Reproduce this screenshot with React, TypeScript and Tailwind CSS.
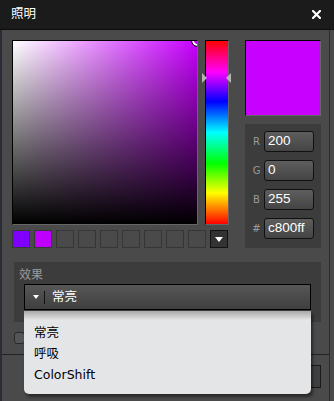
const swatches = ['#8000ff', '#c000ff', '', '', '', '', '', '', ''];

const fields = [
  { label: 'R', value: '200' },
  { label: 'G', value: '0' },
  { label: 'B', value: '255' },
  { label: '#', value: 'c800ff' },
];

const ui = { fontFamily: '"DejaVu Sans", "Noto Sans CJK SC", sans-serif' };
const num = { fontFamily: '"Liberation Sans", "Noto Sans CJK SC", sans-serif' };

export default function App() {
  return (
    <div className="relative w-[334px] h-[401px] overflow-hidden bg-[#4a4a4a]" style={ui}>
      {/* title bar */}
      <div className="flex h-[30px] items-center justify-between border-b border-[#0e0e0e] bg-[#1b1b1b] pl-[11px] pr-[13px]">
        <span className="text-[12.5px] text-white leading-none">照明</span>
        <svg width="9" height="9" viewBox="0 0 9 9">
          <path d="M1 1 L8 8 M8 1 L1 8" stroke="#fff" strokeWidth="2.2" strokeLinecap="square" />
        </svg>
      </div>

      <div className="h-[371px] border-l-2 border-[#2a2d33] border-r border-r-[#2c2c2c] w-[330px]">
        <div className="flex pl-[10px] pt-[10px]">
          {/* picker column */}
          <div className="flex flex-col gap-[5px]">
            <div className="flex gap-[7px]">
              <div className="relative h-[185px] w-[186px] overflow-hidden border border-t-black border-l-black border-r-[#666] border-b-[#666]">
                <div className="absolute inset-0 bg-[linear-gradient(to_right,#ffffff,#c800ff)]" />
                <div className="absolute inset-0 bg-[linear-gradient(to_bottom,rgba(0,0,0,0),#000000)]" />
                <div className="absolute -right-[6px] -top-[6px] h-[11px] w-[11px] rounded-full border-2 border-white outline outline-1 outline-black" />
              </div>
              <div className="relative h-[185px] w-[24px]">
                <div className="h-full w-full border border-t-black border-l-black border-r-[#666] border-b-[#666] bg-[linear-gradient(to_bottom,#ff0000,#ff00ff_17%,#0000ff_33%,#00ffff_50%,#00ff00_67%,#ffff00_83%,#ff0000)]" />
                <div className="absolute -left-[3px] top-[33px] h-0 w-0 border-y-[5px] border-l-[5px] border-y-transparent border-l-[#b4b4b4]" />
                <div className="absolute -right-[2px] top-[33px] h-0 w-0 border-y-[5px] border-r-[5px] border-y-transparent border-r-[#b4b4b4]" />
              </div>
            </div>
            <div className="flex items-center">
              <div className="flex gap-[4px]">
                {swatches.map((c, i) => (
                  <div
                    key={i}
                    className="h-[18px] w-[18px] border border-[#363636]"
                    style={{ background: c || '#4a4a4a' }}
                  />
                ))}
              </div>
              <div className="ml-[4px] flex h-[18px] w-[18px] items-center justify-center border border-[#111] bg-[#333]">
                <div className="h-0 w-0 border-x-[4px] border-t-[5px] border-x-transparent border-t-white" />
              </div>
            </div>
          </div>

          {/* preview + values */}
          <div className="ml-[16px] flex flex-col gap-[8px]">
            <div className="h-[76px] w-[76px] border border-t-black border-l-black border-r-[#666] border-b-[#666] bg-[#c800ff]" />
            <div className="flex h-[124px] w-[76px] flex-col gap-[8px] bg-[#3c3c3c] pt-[7px] pl-[4px]">
              {fields.map((f) => (
                <div key={f.label} className="flex h-[21px] items-center">
                  <span className="w-[15px] text-center text-[10px] text-[#9a9a9a]">{f.label}</span>
                  <div
                    className="flex h-[21px] w-[50px] items-center rounded-[3px] border border-[#111] bg-[linear-gradient(to_bottom,#5e5e5e,#444444)] pl-[3px] text-[13.5px] text-white"
                    style={num}
                  >
                    {f.value}
                  </div>
                </div>
              ))}
            </div>
          </div>
        </div>

        {/* effect panel */}
        <div className="ml-[12px] mt-[14px] h-[60px] w-[307px] bg-[#3c3c3c] pt-[5px]">
          <div className="pl-[5px] text-[12px] leading-[16px] text-[#9a9a9a]">效果</div>
          <div className="ml-[10px] mt-[1px] flex h-[26px] w-[287px] items-center border border-black bg-[linear-gradient(to_bottom,#575757,#3f3f3f)]">
            <div className="ml-[8px] h-0 w-0 border-x-[3px] border-t-[4px] border-x-transparent border-t-white" />
            <div className="ml-[5px] h-[13px] w-px bg-[#111]" />
            <span className="ml-[7px] text-[12.5px] text-white">常亮</span>
          </div>
        </div>

        <div className="ml-[12px] mt-[10px] h-[12px] w-[11px] rounded-[3px] border border-[#2a2a2a] bg-[#555]" />
        <div className="mt-[10px] h-px w-full bg-[#222]" />
        <div className="flex justify-end pr-[8px] pt-[10px]">
          <div className="h-[23px] w-[120px] border border-[#1a1a1a] bg-[#3f3f3f]" />
        </div>
      </div>

      {/* open dropdown list */}
      <div className="absolute left-[24px] top-[311px] h-[83px] w-[287px] overflow-hidden rounded-b-[5px] bg-[#e4e5e7] shadow-[2px_3px_3px_rgba(0,0,0,0.45)]">
        <div className="absolute inset-x-0 top-0 h-[9px] bg-[linear-gradient(to_bottom,#a9a9a9,#e4e5e7)]" />
        <div className="relative pt-[11px] pl-[10px] text-[12.5px] text-black">
          <div className="h-[21px] leading-[21px]">常亮</div>
          <div className="h-[21px] leading-[21px]">呼吸</div>
          <div className="h-[21px] leading-[21px]">ColorShift</div>
        </div>
      </div>
    </div>
  );
}
